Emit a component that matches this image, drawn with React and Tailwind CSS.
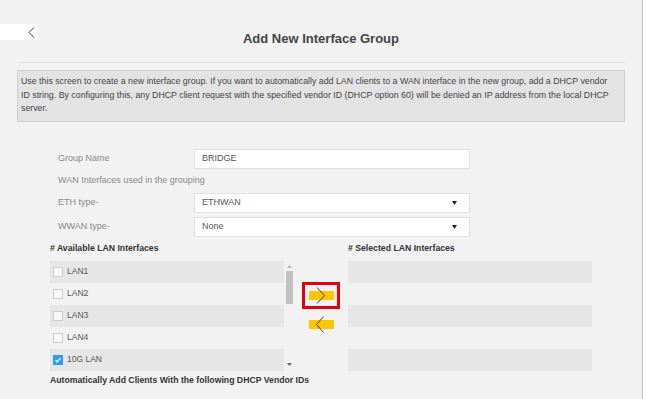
import React from 'react';

const lanItems = [
  { name: 'LAN1', checked: false },
  { name: 'LAN2', checked: false },
  { name: 'LAN3', checked: false },
  { name: 'LAN4', checked: false },
  { name: '10G LAN', checked: true },
];

function Caret() {
  return (
    <svg width="5" height="4" viewBox="0 0 5 4">
      <path d="M0 0 L5 0 L2.5 4 Z" fill="#222" />
    </svg>
  );
}

function Checkbox({ checked }) {
  if (checked) {
    return (
      <span className="w-[10px] h-[10px] bg-[#2d9cf0] flex items-center justify-center">
        <svg width="8" height="8" viewBox="0 0 8 8">
          <path d="M1.5 4.2 L3.2 5.8 L6.5 2.2" stroke="#fff" strokeWidth="1.2" fill="none" />
        </svg>
      </span>
    );
  }
  return <span className="w-[10px] h-[10px] border border-[#cccccc] bg-[#f8f8f8]" />;
}

function FormRow({ label, children }) {
  return (
    <div className="flex items-center h-[20px]">
      <div className="w-[136px] text-[9px] text-[#888]">{label}</div>
      {children}
    </div>
  );
}

function SelectBox({ value }) {
  return (
    <div className="w-[276px] h-full bg-white border border-[#e0e0e0] flex items-center justify-between pl-[7px] pr-[12px] text-[9px] text-[#555]">
      <span>{value}</span>
      <Caret />
    </div>
  );
}

function MoveButton({ dir, active }) {
  return (
    <div className={`w-[38px] h-[27px] border-[3px] flex items-center justify-center ${active ? 'border-[#e3000f]' : 'border-transparent'}`}>
      <div className="relative w-[25px] h-[9px] bg-[#ffc600] mt-[1px]">
        <svg className="absolute left-[7px] top-[-4px]" width="10" height="17" viewBox="0 0 10 17">
          {dir === 'right' ? (
            <path d="M1 0.5 L8.5 8.5 L1 16.5" stroke="#4a3d12" strokeWidth="1" fill="none" />
          ) : (
            <path d="M7.5 0.5 L0.5 8.5 L7.5 16.5" stroke="#4a3d12" strokeWidth="1" fill="none" />
          )}
        </svg>
      </div>
    </div>
  );
}

export default function App() {
  return (
    <div className="w-[647px] h-[399px] overflow-hidden bg-white flex font-['Liberation_Sans',Arial,sans-serif]">
      <div className="w-[643px] h-full bg-[#f2f2f2] border-r border-[#b8b8b8]">
        {/* Header */}
        <div className="flex pt-[24px]">
          <div className="w-[37px] h-[16px] bg-white flex items-center justify-end pr-[2px]">
            <svg width="7" height="11" viewBox="0 0 7 11">
              <path d="M6 0.5 L1 5.5 L6 10.5" stroke="#333" strokeWidth="1" fill="none" />
            </svg>
          </div>
          <h1 className="flex-1 text-center pt-[7px] text-[13px] leading-[16px] font-bold text-[#444]">
            Add New Interface Group
          </h1>
          <div className="w-[37px]" />
        </div>

        <div className="mx-[17px] mt-[15px] border-t border-[#e4e4e4]" />

        {/* Info box */}
        <div className="mx-[17px] mt-[7px] border border-[#cfcfcf] bg-[#e3e3e3] px-[3px] pt-[4px] pb-[5px] text-[8.8px] leading-[13.5px] text-[#444] whitespace-nowrap">
          Use this screen to create a new interface group. If you want to automatically add LAN clients to a WAN interface in the new group, add a DHCP vendor
          <br />
          ID string. By configuring this, any DHCP client request with the specified vendor ID (DHCP option 60) will be denied an IP address from the local DHCP
          <br />
          server.
        </div>

        {/* Form */}
        <div className="pl-[58px] mt-[27px]">
          <FormRow label="Group Name">
            <div className="w-[276px] h-full bg-white border border-[#e0e0e0] flex items-center px-[7px] text-[9px] text-[#555]">
              BRIDGE
            </div>
          </FormRow>
          <div className="h-[24px] flex items-center text-[9px] text-[#888]">WAN Interfaces used in the grouping</div>
          <FormRow label="ETH type-">
            <SelectBox value="ETHWAN" />
          </FormRow>
          <div className="h-[4px]" />
          <FormRow label="WWAN type-">
            <SelectBox value="None" />
          </FormRow>
        </div>

        {/* LAN interfaces */}
        <div className="pl-[50px]">
          <div className="flex h-[24px] items-center text-[8.7px] font-bold text-[#333]">
            <div className="w-[298px]"># Available LAN Interfaces</div>
            <div># Selected LAN Interfaces</div>
          </div>
          <div className="flex">
            <div className="w-[234px]">
              {lanItems.map((item, i) => (
                <div key={item.name} className={`h-[22px] flex items-center gap-[4px] pl-[3px] text-[8.5px] text-[#555] ${i % 2 === 0 ? 'bg-[#e6e6e6]' : ''}`}>
                  <Checkbox checked={item.checked} />
                  <span>{item.name}</span>
                </div>
              ))}
            </div>
            <div className="w-[10px] flex flex-col items-center pt-[4px] pb-[5px]">
              <svg width="5" height="3" viewBox="0 0 5 3">
                <path d="M0 3 L5 3 L2.5 0 Z" fill="#b5b5b5" />
              </svg>
              <div className="w-[7px] h-[33px] bg-[#c1c1c1] mt-[3px]" />
              <div className="flex-1" />
              <svg width="5" height="3" viewBox="0 0 5 3">
                <path d="M0 0 L5 0 L2.5 3 Z" fill="#666" />
              </svg>
            </div>
            <div className="w-[54px] flex flex-col items-center pt-[21px] gap-[2px]">
              <MoveButton dir="right" active />
              <MoveButton dir="left" />
            </div>
            <div className="w-[244px]">
              {[0, 1, 2, 3, 4].map((i) => (
                <div key={i} className={`h-[22px] ${i % 2 === 0 ? 'bg-[#e6e6e6]' : ''}`} />
              ))}
            </div>
          </div>
          <div className="h-[20px] flex items-center text-[8.7px] font-bold text-[#333]">
            Automatically Add Clients With the following DHCP Vendor IDs
          </div>
        </div>
      </div>
    </div>
  );
}
